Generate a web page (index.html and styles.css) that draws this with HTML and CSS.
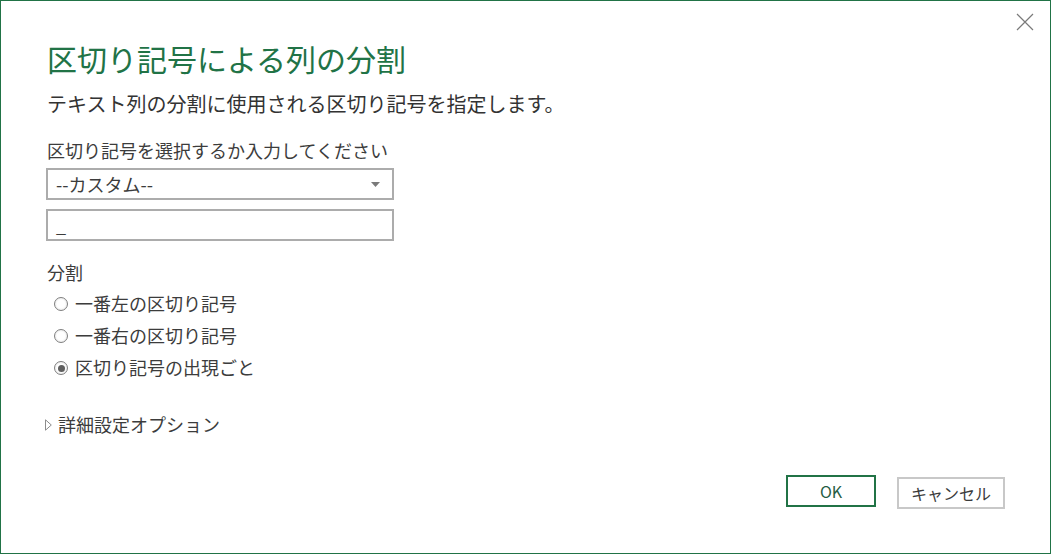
FILE: index.html
```html
<!DOCTYPE html>
<html lang="ja">
<head>
<meta charset="utf-8">
<title>区切り記号による列の分割</title>
<link rel="stylesheet" href="styles.css">
</head>
<body>
<div class="dialog">
  <button class="close" aria-label="閉じる">
    <svg width="18" height="18" viewBox="0 0 18 18"><path d="M1 1 L17 17 M17 1 L1 17" stroke="#7a7a7a" stroke-width="1.2" fill="none"/></svg>
  </button>
  <h1 class="title">区切り記号による列の分割</h1>
  <p class="subtitle">テキスト列の分割に使用される区切り記号を指定します。</p>
  <div class="label first">区切り記号を選択するか入力してください</div>
  <div class="select">
    <span>--カスタム--</span>
    <svg class="arrow" width="9" height="5" viewBox="0 0 9 5"><path d="M0 0 H9 L4.5 5 Z" fill="#7a7a7a"/></svg>
  </div>
  <div class="input">_</div>
  <div class="label split">分割</div>
  <div class="radios">
    <div class="radio"><span class="circle"></span><span class="rlabel">一番左の区切り記号</span></div>
    <div class="radio"><span class="circle"></span><span class="rlabel">一番右の区切り記号</span></div>
    <div class="radio"><span class="circle checked"></span><span class="rlabel">区切り記号の出現ごと</span></div>
  </div>
  <div class="advanced">
    <svg class="tri" width="7" height="12" viewBox="0 0 7 12"><path d="M0.5 0.8 L6.3 6 L0.5 11.2 Z" fill="none" stroke="#8c8c8c" stroke-width="1"/></svg>
    <span>詳細設定オプション</span>
  </div>
  <div class="footer">
    <button class="btn ok">OK</button>
    <button class="btn cancel">キャンセル</button>
  </div>
</div>
</body>
</html>
```

FILE: styles.css
```css
* { box-sizing: border-box; }
html, body { margin: 0; padding: 0; background: #fff; }
body {
  font-family: "Noto Sans CJK JP", "Noto Sans", sans-serif;
  color: #3c3c3c;
}
.dialog {
  position: relative;
  width: 1051px;
  height: 554px;
  border: 1px solid #217346;
  padding: 37px 45px 0 46px;
}
.close {
  position: absolute;
  top: 12px;
  right: 16px;
  width: 18px;
  height: 18px;
  padding: 0;
  border: 0;
  background: transparent;
  display: flex;
}
.title {
  margin: 0;
  font-size: 30px;
  line-height: 40px;
  font-weight: normal;
  color: #217346;
}
.subtitle {
  margin: 12px 0 0;
  font-size: 20px;
  line-height: 28px;
  color: #333;
}
.label {
  font-size: 18px;
  line-height: 24px;
}
.label.first { margin-top: 20px; }
.select, .input {
  width: 348px;
  height: 32px;
  margin-left: -1px;
  border: 2px solid #acacac;
  font-size: 18px;
  line-height: 28px;
  padding: 0 12px 0 8px;
}
.select {
  margin-top: 6px;
  display: flex;
  align-items: center;
  justify-content: space-between;
}
.select span { line-height: 28px; }
.input { margin-top: 9px; }
.label.split { margin-top: 19px; }
.radios {
  margin-top: 3px;
  display: flex;
  flex-direction: column;
}
.radio {
  display: flex;
  align-items: flex-start;
  height: 32px;
  padding-left: 7px;
  font-size: 18px;
  line-height: 32px;
}
.circle {
  width: 14px;
  height: 14px;
  margin-top: 10px;
  margin-right: 7px;
  border-radius: 50%;
  border: 1px solid #7f7f7f;
  background: radial-gradient(circle, #ffffff 45%, #dcdcdc 100%);
  display: flex;
  align-items: center;
  justify-content: center;
  flex: none;
}
.circle.checked::after {
  content: "";
  width: 7px;
  height: 7px;
  border-radius: 50%;
  background: #5f5f5f;
}
.advanced {
  margin-top: 29px;
  margin-left: -2px;
  display: flex;
  align-items: center;
  font-size: 18px;
  line-height: 24px;
}
.tri { margin: 2px 6px 0 0; flex: none; }
.footer {
  margin-top: 39px;
  display: flex;
  justify-content: flex-end;
  align-items: flex-start;
  gap: 21px;
}
.btn {
  font-family: "Noto Sans CJK JP", "Noto Sans", sans-serif;
  font-size: 16px;
  height: 32px;
  padding: 0;
  background: #fff;
  line-height: 28px;
}
.ok {
  width: 90px;
  border: 2px solid #217346;
  color: #265c44;
}
.cancel {
  width: 108px;
  margin-top: 2px;
  border: 2px solid #c8c8c8;
  color: #3a3a3a;
}
```
